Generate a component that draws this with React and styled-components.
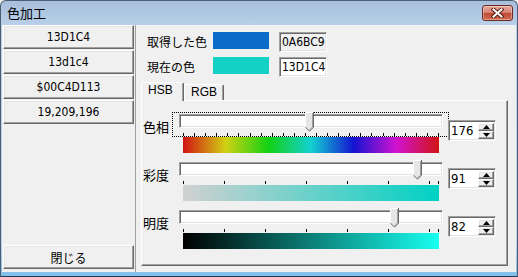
import React from 'react';
import styled, { createGlobalStyle, css } from 'styled-components';

const UI = `"Liberation Sans Narrow", "DejaVu Sans Condensed", "Liberation Sans", sans-serif`;
const JP = `"Noto Sans CJK JP", sans-serif`;

const GlobalStyle = createGlobalStyle`
  html, body { margin: 0; padding: 0; background: #f0f0f0; overflow: hidden; }
  body { font-family: ${JP}; color: #000; }
`;

const raised = css`
  border: 1px solid;
  border-color: #fff #696969 #696969 #fff;
  box-shadow: inset -1px -1px #a0a0a0, inset 1px 1px #e3e3e3;
`;

const sunken = css`
  border: 1px solid;
  border-color: #a0a0a0 #fff #fff #a0a0a0;
  box-shadow: inset 1px 1px #696969, inset -1px -1px #e3e3e3;
`;

const Window = styled.div`
  width: 518px;
  height: 277px;
  box-sizing: border-box;
  border: 1px solid #4c5e73;
  border-bottom-color: #1f3a52;
  border-radius: 6px 6px 0 0;
  background: linear-gradient(to bottom, #a7bfdb 0, #b9d0ea 24px, #bcd3ec 240px, #7fbfe9 100%);
  display: flex;
  flex-direction: column;
  overflow: hidden;
`;

const TitleBar = styled.div`
  height: 24px;
  flex: none;
  display: flex;
  align-items: center;
  justify-content: space-between;
  padding: 0 4px 0 6px;
`;

const Title = styled.span`
  font: 13px/16px ${JP};
  color: #000;
`;

const CloseBtn = styled.div`
  width: 31px;
  height: 16px;
  box-sizing: border-box;
  border: 1px solid #6b2a22;
  border-radius: 3px;
  background: linear-gradient(to bottom, #e5a596 0%, #d8897a 45%, #c24a34 52%, #cf6d55 100%);
  box-shadow: inset 0 0 0 1px rgba(255, 255, 255, 0.35);
  display: flex;
  align-items: center;
  justify-content: center;
`;

const Client = styled.div`
  flex: 1;
  margin: 0 1px 4px;
  background: #f0f0f0;
  display: flex;
  min-height: 0;
`;

const LeftPanel = styled.div`
  width: 134px;
  box-sizing: border-box;
  padding: 0 1px 3px 1px;
  border-right: 1px solid #a0a0a0;
  display: flex;
  flex-direction: column;
  gap: 1px;
`;

const PanelButton = styled.div`
  ${raised};
  box-sizing: border-box;
  height: ${p => p.$h || 24}px;
  width: 131px;
  background: #f0f0f0;
  display: flex;
  align-items: center;
  justify-content: center;
  font: ${p => (p.$jp ? `12px ${JP}` : `12px ${UI}`)};
  margin-top: ${p => (p.$bottom ? 'auto' : '0')};
`;

const RightPanel = styled.div`
  flex: 1;
  display: flex;
  flex-direction: column;
  padding: 7px 8px 6px 5px;
  min-width: 0;
`;

const ColorRow = styled.div`
  display: flex;
  align-items: flex-start;
  height: 20px;
  padding-left: 6px;
  & + & { margin-top: 5px; }
`;

const ColorLabel = styled.span`
  width: 66px;
  font: 12px/20px ${JP};
`;

const Swatch = styled.div`
  width: 56px;
  height: 17px;
  background: ${p => p.$color};
`;

const HexBox = styled.div`
  ${sunken};
  box-sizing: border-box;
  margin-left: 10px;
  width: 48px;
  height: 20px;
  padding-left: 2px;
  background: ${p => (p.$readOnly ? '#f0f0f0' : '#fff')};
  font: 12px/18px ${UI};
`;

const TabStrip = styled.div`
  margin-top: 5px;
  height: 18px;
  display: flex;
  align-items: flex-end;
`;

const Tab = styled.div`
  position: relative;
  z-index: ${p => (p.$active ? 1 : 0)};
  box-sizing: border-box;
  width: ${p => p.$w}px;
  height: ${p => (p.$active ? 19 : 16)}px;
  margin-bottom: ${p => (p.$active ? -1 : 0)}px;
  padding-left: 6px;
  border: 1px solid;
  border-bottom: none;
  border-color: #fff #696969 transparent #fff;
  border-radius: 2px 2px 0 0;
  box-shadow: inset -1px 0 #a0a0a0;
  background: #f0f0f0;
  font: 12px/${p => (p.$active ? 14 : 15)}px "Liberation Sans", sans-serif;
`;

const Pane = styled.div`
  flex: 1;
  box-sizing: border-box;
  border: 1px solid;
  border-color: #fff #696969 #696969 #fff;
  box-shadow: inset -1px -1px #a0a0a0;
  padding: 11px 0 0 1px;
  display: flex;
  flex-direction: column;
  gap: 7px;
`;

const SliderRow = styled.div`
  display: flex;
  align-items: flex-start;
  height: 41px;
`;

const RowLabel = styled.span`
  width: 29px;
  margin-top: 7px;
  font: 13px/16px ${JP};
`;

const SliderCol = styled.div`
  display: flex;
  flex-direction: column;
  width: 277px;
`;

const FocusFrame = styled.div`
  box-sizing: border-box;
  height: 25px;
  padding: 1px 5px 0 6px;
  border: 1px dotted ${p => (p.$focused ? '#000' : 'transparent')};
`;

const Track = styled.div`
  ${sunken};
  position: relative;
  box-sizing: border-box;
  width: 264px;
  height: 14px;
  background: #fff;
`;

const ThumbWrap = styled.div`
  position: absolute;
  top: -3px;
  width: 9px;
  height: 20px;
`;

const TickRow = styled.svg`
  display: block;
  width: 264px;
  height: 8px;
`;

const GradientBar = styled.div`
  margin-left: 11px;
  width: 256px;
  height: 16px;
  background: ${p => p.$bg};
`;

const SpinBox = styled.div`
  ${sunken};
  box-sizing: border-box;
  margin: 8px 0 0 -1px;
  width: 48px;
  height: 21px;
  background: #fff;
  display: flex;
  align-items: center;
  justify-content: space-between;
  padding: 0 1px 0 2px;
  font: 13px ${UI};
`;

const SpinButtons = styled.div`
  display: flex;
  flex-direction: column;
`;

const SpinBtn = styled.div`
  ${raised};
  box-sizing: border-box;
  width: 16px;
  height: 8px;
  background: #f0f0f0;
  display: flex;
  align-items: center;
  justify-content: center;
`;

const Thumb = () => (
  <svg width="9" height="20" viewBox="0 0 9 20">
    <polygon points="0,0 9,0 9,15 4.5,19.5 0,15" fill="#e6e6e6" />
    <polyline points="0.5,15 0.5,0.5 8.5,0.5" fill="none" stroke="#fff" />
    <polyline points="7.5,1 7.5,15 4.5,18" fill="none" stroke="#a0a0a0" />
    <polyline points="8.5,0 8.5,15.2 4.5,19.2 0.5,15.2" fill="none" stroke="#696969" />
  </svg>
);

const Arrow = ({ up }) => (
  <svg width="7" height="4" viewBox="0 0 7 4">
    <polygon points={up ? '3.5,0 7,4 0,4' : '0,0 7,0 3.5,4'} fill="#000" />
  </svg>
);

const CloseGlyph = () => (
  <svg width="13" height="10" viewBox="0 0 13 10">
    <path d="M2.5 1.5 L10.5 8.5 M10.5 1.5 L2.5 8.5" stroke="#5a1c14" strokeWidth="4" strokeLinecap="square" />
    <path d="M2.5 1.5 L10.5 8.5 M10.5 1.5 L2.5 8.5" stroke="#fff" strokeWidth="2" strokeLinecap="square" />
  </svg>
);

const hueTicks = Array.from({ length: 24 }, (_, i) => 4 + (i * 255) / 23);
const pctTicks = [...Array.from({ length: 7 }, (_, i) => 4 + i * 40.96), 259];

const rows = [
  {
    label: '色相',
    value: 176,
    frac: 176 / 360,
    ticks: hueTicks,
    focused: true,
    bg: 'linear-gradient(to right, rgb(209,19,19), rgb(209,209,19) 16.67%, rgb(19,209,19) 33.33%, rgb(19,209,209) 50%, rgb(19,19,209) 66.67%, rgb(209,19,209) 83.33%, rgb(209,19,19))',
  },
  {
    label: '彩度',
    value: 91,
    frac: 0.91,
    ticks: pctTicks,
    bg: 'linear-gradient(to right, rgb(209,209,209), rgb(0,209,195))',
  },
  {
    label: '明度',
    value: 82,
    frac: 0.82,
    ticks: pctTicks,
    bg: 'linear-gradient(to right, #000, rgb(23,255,240))',
  },
];

const formats = ['13D1C4', '13d1c4', '$00C4D113', '19,209,196'];

export default function App() {
  return (
    <>
      <GlobalStyle />
      <Window>
        <TitleBar>
          <Title>色加工</Title>
          <CloseBtn>
            <CloseGlyph />
          </CloseBtn>
        </TitleBar>
        <Client>
          <LeftPanel>
            {formats.map(f => (
              <PanelButton key={f}>{f}</PanelButton>
            ))}
            <PanelButton $bottom $jp>閉じる</PanelButton>
          </LeftPanel>
          <RightPanel>
            <ColorRow>
              <ColorLabel>取得した色</ColorLabel>
              <Swatch $color="#0A6BC9" />
              <HexBox $readOnly>0A6BC9</HexBox>
            </ColorRow>
            <ColorRow>
              <ColorLabel>現在の色</ColorLabel>
              <Swatch $color="#13D1C4" />
              <HexBox>13D1C4</HexBox>
            </ColorRow>
            <TabStrip>
              <Tab $active $w={43}>HSB</Tab>
              <Tab $w={40}>RGB</Tab>
            </TabStrip>
            <Pane>
              {rows.map(r => (
                <SliderRow key={r.label}>
                  <RowLabel>{r.label}</RowLabel>
                  <SliderCol>
                    <FocusFrame $focused={r.focused}>
                      <Track>
                        <ThumbWrap style={{ left: Math.round(r.frac * 256) }}>
                          <Thumb />
                        </ThumbWrap>
                      </Track>
                      <TickRow viewBox="0 0 264 8">
                        {r.ticks.map((x, i) => (
                          <rect key={i} x={Math.round(x)} y="5" width="1" height="3" fill="#000" />
                        ))}
                      </TickRow>
                    </FocusFrame>
                    <GradientBar $bg={r.bg} />
                  </SliderCol>
                  <SpinBox>
                    <span>{r.value}</span>
                    <SpinButtons>
                      <SpinBtn><Arrow up /></SpinBtn>
                      <SpinBtn><Arrow /></SpinBtn>
                    </SpinButtons>
                  </SpinBox>
                </SliderRow>
              ))}
            </Pane>
          </RightPanel>
        </Client>
      </Window>
    </>
  );
}
